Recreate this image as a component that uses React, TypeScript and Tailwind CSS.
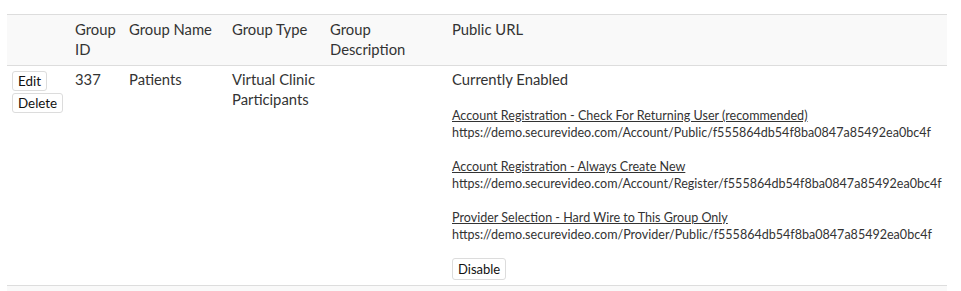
import React from "react";

const links = [
  {
    label: "Account Registration - Check For Returning User (recommended)",
    url: "https://demo.securevideo.com/Account/Public/f555864db54f8ba0847a85492ea0bc4f",
  },
  {
    label: "Account Registration - Always Create New",
    url: "https://demo.securevideo.com/Account/Register/f555864db54f8ba0847a85492ea0bc4f",
  },
  {
    label: "Provider Selection - Hard Wire to This Group Only",
    url: "https://demo.securevideo.com/Provider/Public/f555864db54f8ba0847a85492ea0bc4f",
  },
];

const btn =
  "block bg-white border border-[#dcdcdc] rounded-[3px] px-[5px] text-[13.4px] leading-[18px] text-[#111]";

export default function App() {
  return (
    <div className="bg-white w-[961px] h-[291px] overflow-hidden pt-[14px] pl-[7px] font-['Lato',sans-serif] text-[14.8px] leading-[20px] text-[#333]">
      <table className="w-[940px] border-collapse table-fixed">
        <colgroup>
          <col className="w-[63px]" />
          <col className="w-[54px]" />
          <col className="w-[103px]" />
          <col className="w-[98px]" />
          <col className="w-[122px]" />
          <col className="w-[500px]" />
        </colgroup>
        <thead>
          <tr className="bg-[#f9f9f9] border-t border-b border-[#dddddd] align-top text-left">
            <th className="font-normal px-[5px] pt-[4px] pb-[6px]"></th>
            <th className="font-normal px-[5px] pt-[4px] pb-[6px]">Group ID</th>
            <th className="font-normal px-[5px] pt-[4px] pb-[6px]">Group Name</th>
            <th className="font-normal px-[5px] pt-[4px] pb-[6px]">Group Type</th>
            <th className="font-normal px-[5px] pt-[4px] pb-[6px]">Group Description</th>
            <th className="font-normal px-[5px] pt-[4px] pb-[6px]">Public URL</th>
          </tr>
        </thead>
        <tbody>
          <tr className="align-top border-b border-[#dddddd]">
            <td className="px-[5px] pt-[5px] pb-[5px]">
              <div className="flex flex-col items-start gap-[2px]">
                <button className={btn}>Edit</button>
                <button className={btn}>Delete</button>
              </div>
            </td>
            <td className="px-[5px] pt-[3px] pb-[5px]">337</td>
            <td className="px-[5px] pt-[3px] pb-[5px]">Patients</td>
            <td className="px-[5px] pt-[3px] pb-[5px]">Virtual Clinic Participants</td>
            <td className="px-[5px] pt-[3px] pb-[5px]"></td>
            <td className="px-[5px] pt-[3px] pb-[5px]">
              <div>Currently Enabled</div>
              <div className="text-[12.55px] leading-[17px] mt-[18px]">
                {links.map((l, i) => (
                  <div key={l.label} className={i === links.length - 1 ? "mb-[15px]" : "mb-[17px]"}>
                    <a href="#" className="underline text-[#333]">
                      {l.label}
                    </a>
                    <div>{l.url}</div>
                  </div>
                ))}
              </div>
              <button className="block bg-white border border-[#dcdcdc] rounded-[3px] px-[5px] text-[13px] leading-[20px] text-[#111]">
                Disable
              </button>
            </td>
          </tr>
          <tr className="bg-[#f9f9f9] h-[20px]">
            <td colSpan={6}></td>
          </tr>
        </tbody>
      </table>
    </div>
  );
}
